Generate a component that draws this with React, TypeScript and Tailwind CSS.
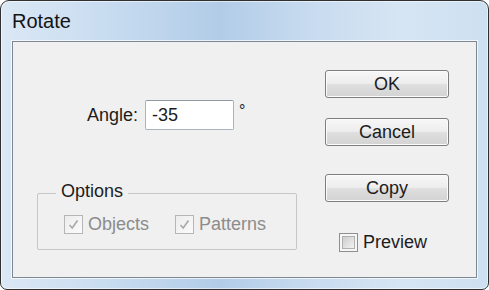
import React from "react";

function DisabledCheck() {
  return (
    <div className="w-[19px] h-[19px] border border-[#b6b6b6] bg-[linear-gradient(135deg,#ececec,#fbfbfb)] flex items-center justify-center shrink-0">
      <svg width="13" height="13" viewBox="0 0 13 13">
        <path d="M2.5 7 L5.2 10 L10.5 2.5" fill="none" stroke="#a9a9a9" strokeWidth="1.6" />
      </svg>
    </div>
  );
}

function Btn({ label }: { label: string }) {
  return (
    <div className="w-[124px] h-[28px] rounded-[3px] border border-[#7e7e7e] bg-[linear-gradient(to_bottom,#f7f7f7_0%,#ededed_48%,#dfdfdf_52%,#d3d3d3_100%)] shadow-[inset_0_0_0_1px_#fbfbfb] flex items-center justify-center text-[18px] leading-[22px] text-[#1c1c1c]">
      {label}
    </div>
  );
}

export default function App() {
  return (
    <div className="w-[489px] h-[290px] bg-white font-['Liberation_Sans',Arial,sans-serif]">
      <div className="w-[489px] h-[290px] rounded-t-[9px] rounded-b-[7px] border border-[#303030] bg-[linear-gradient(90deg,#dbe8f5_0%,#c8dcf0_22%,#b2cce8_45%,#c6daef_62%,#d6e5f3_82%,#cde0f1_100%)] shadow-[inset_0_0_0_1px_rgba(255,255,255,0.55)] flex flex-col px-[11px] pb-[11px]">
        <div className="h-[40px] pt-[9px] text-[20px] leading-[23px] text-[#141414]">Rotate</div>
        <div className="flex-1 border border-[#7d8893] bg-[#f0f0f0] shadow-[0_0_0_1px_rgba(255,255,255,0.7)] flex">
          <div className="w-[299px] flex flex-col">
            <div className="mt-[58px] pl-[74px] flex items-center h-[30px]">
              <span className="text-[18px] leading-[22px] text-[#1c1c1c]">Angle:</span>
              <div className="ml-[7px] w-[89px] h-[30px] rounded-[2px] border border-[#a9b4c0] border-t-[#8f9aa6] bg-white flex items-center pl-[6px] text-[18px] leading-[22px] text-[#1c1c1c]">
                -35
              </div>
              <span className="ml-[5px] self-start mt-[3px] text-[16px] leading-[16px] text-[#1c1c1c]">°</span>
            </div>
            <div className="relative mt-[63px] ml-[24px] w-[260px] h-[57px] border border-[#c6c6c6] rounded-[2px]">
              <span className="absolute left-[18px] top-[-14px] px-[5px] bg-[#f0f0f0] text-[18px] leading-[22px] text-[#1c1c1c]">
                Options
              </span>
              <div className="flex items-center pt-[20px] pl-[26px]">
                <DisabledCheck />
                <span className="ml-[5px] text-[18px] leading-[20px] text-[#8c8c8c]">Objects</span>
                <div className="ml-[26px]">
                  <DisabledCheck />
                </div>
                <span className="ml-[5px] text-[18px] leading-[20px] text-[#8c8c8c]">Patterns</span>
              </div>
            </div>
          </div>
          <div className="flex flex-col pl-[13px]">
            <div className="mt-[28px]">
              <Btn label="OK" />
            </div>
            <div className="mt-[20px]">
              <Btn label="Cancel" />
            </div>
            <div className="mt-[28px]">
              <Btn label="Copy" />
            </div>
            <div className="mt-[30px] ml-[14px] flex items-center">
              <div className="w-[19px] h-[19px] border border-[#8e8f8f] bg-[#f6f6f6] p-[2px] shrink-0">
                <div className="w-full h-full border border-[#b0b0b0] bg-[linear-gradient(135deg,#cdcdcd,#f2f2f2)]" />
              </div>
              <span className="ml-[5px] text-[18px] leading-[20px] text-[#1c1c1c]">Preview</span>
            </div>
          </div>
        </div>
      </div>
    </div>
  );
}
